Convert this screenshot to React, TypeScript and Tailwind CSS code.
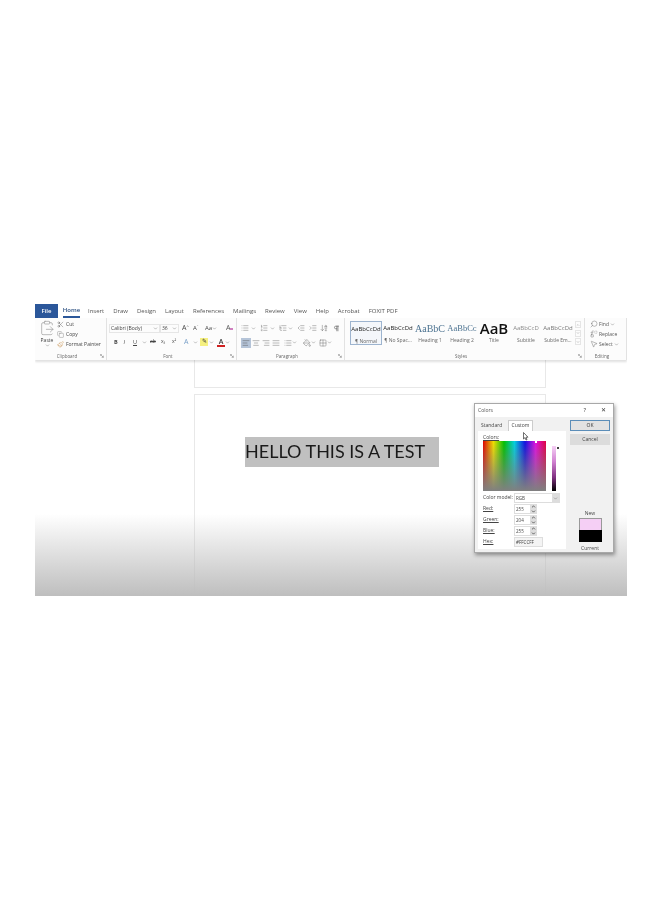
import React from "react";
import {
  AlignCenter,
  AlignJustify,
  AlignLeft,
  AlignRight,
  ArrowDownAZ,
  ChevronDown,
  ChevronUp,
  ClipboardPaste,
  Copy,
  Grid2x2,
  IndentDecrease,
  IndentIncrease,
  List,
  ListOrdered,
  ListTree,
  MousePointer2,
  PaintBucket,
  Paintbrush,
  Pilcrow,
  Replace,
  Scissors,
  Search,
} from "lucide-react";

const TABS = ["Insert", "Draw", "Design", "Layout", "References", "Mailings", "Review", "View", "Help", "Acrobat", "FOXIT PDF"];

const STYLES = [
  { sample: "AaBbCcDd", label: "¶ Normal", cls: "text-[6px] text-[#222]", box: true },
  { sample: "AaBbCcDd", label: "¶ No Spac...", cls: "text-[6px] text-[#222]", box: false },
  { sample: "AaBbC", label: "Heading 1", cls: "text-[10px] text-[#4d7391] font-['Liberation_Serif',serif]", box: false },
  { sample: "AaBbCc", label: "Heading 2", cls: "text-[8.5px] text-[#4d7391] font-['Liberation_Serif',serif]", box: false },
  { sample: "AaB", label: "Title", cls: "text-[15px] font-semibold text-[#111]", box: false },
  { sample: "AaBbCcD", label: "Subtitle", cls: "text-[6px] text-[#8a8a8a]", box: false },
  { sample: "AaBbCcDd", label: "Subtle Em...", cls: "text-[6px] text-[#777]", box: false },
];

function Caret() {
  return <ChevronDown size={5} strokeWidth={2} className="text-[#666] shrink-0" />;
}

function Group({ title, width, launcher = true, children }: { title: string; width: string; launcher?: boolean; children: React.ReactNode }) {
  return (
    <div className={`${width} h-full flex flex-col border-r border-[#e2e2e2] shrink-0`}>
      <div className="flex-1 min-h-0">{children}</div>
      <div className="relative h-[8px] flex items-center justify-center pr-[7px] text-[4.5px] leading-none text-[#666]">
        {title}
        {launcher && (
          <svg viewBox="0 0 6 6" className="absolute right-[2px] top-[2px] w-[4px] h-[4px] text-[#777]" fill="none" stroke="currentColor" strokeWidth="0.8">
            <path d="M0.5 3V0.5H3M1.5 1.5L5 5M5 2.5V5H2.5" />
          </svg>
        )}
      </div>
    </div>
  );
}

function SpinRow({ label, value }: { label: string; value: string }) {
  return (
    <div className="h-[11px] flex items-center">
      <span className="w-[31px] text-[5px] text-[#444] underline">{label}</span>
      <span className="w-[17px] h-[10px] bg-white border border-[#ddd] text-[4.5px] leading-[8px] pl-[1px] text-[#444]">{value}</span>
      <span className="w-[6px] h-[10px] flex flex-col bg-[#ddd]">
        <ChevronUp size={5} strokeWidth={3} className="text-[#222]" />
        <ChevronDown size={5} strokeWidth={3} className="text-[#222]" />
      </span>
    </div>
  );
}

function ColorsDialog() {
  return (
    <div className="absolute left-[439px] top-[99px] w-[140px] h-[150px] bg-[#f1f1f1] border border-[#a8a8a8] shadow-[1px_2px_4px_rgba(0,0,0,0.4)] flex flex-col">
      <div className="h-[13px] bg-white flex items-center justify-between pl-[3px] pr-[7px] text-[5px] text-[#555]">
        <span>Colors</span>
        <span className="flex gap-[15px] text-[6px] text-[#333]">
          <span>?</span>
          <span>✕</span>
        </span>
      </div>
      <div className="flex flex-1 min-h-0">
        <div className="w-[91px] pt-[3px] pb-[3px] pl-[3px] flex flex-col">
          <div className="h-[11px] flex items-end pl-[3px] text-[5px] text-[#444]">
            <span className="w-[27px] pb-[2px]">Standard</span>
            <span className="w-[25px] h-[11px] bg-white border border-[#ccc] border-b-0 flex items-center justify-center">Custom</span>
          </div>
          <div className="flex-1 bg-white pl-[5px] pt-[3px]">
            <div className="h-[7px] text-[5px] leading-[7px] text-[#444] underline">Colors:</div>
            <div className="flex">
              <div className="relative w-[63px] h-[50px] bg-[linear-gradient(to_bottom,transparent,#808080),linear-gradient(to_right,#e00000,#f0e000,#00c000,#00d0e0,#1010e0,#e010e0,#e00040)]">
                <span className="absolute left-[52px] top-0 w-[2px] h-[2px] bg-white" />
              </div>
              <div className="relative ml-[6px] mt-[5px] w-[4px] h-[45px] bg-[linear-gradient(to_bottom,#f5d0f5,#d080d0_35%,#803080_70%,#000000)]">
                <span className="absolute left-[5px] top-[1px] w-[2px] h-[2px] rounded-full bg-black" />
              </div>
            </div>
            <div className="h-[10px] mt-[2px] flex items-center">
              <span className="w-[31px] text-[5px] text-[#444] whitespace-nowrap">Color model:</span>
              <span className="w-[46px] h-[10px] bg-white border border-[#ddd] text-[4.5px] leading-[8px] pl-[1px] text-[#444] flex justify-between shrink-0">
                RGB
                <span className="w-[7px] bg-[#ddd] flex items-center justify-center">
                  <Caret />
                </span>
              </span>
            </div>
            <SpinRow label="Red:" value="255" />
            <SpinRow label="Green:" value="204" />
            <SpinRow label="Blue:" value="255" />
            <div className="h-[11px] flex items-center">
              <span className="w-[31px] text-[5px] text-[#444] underline">Hex:</span>
              <span className="w-[29px] h-[10px] bg-[#f4f4f4] border border-[#ddd] text-[4.5px] leading-[8px] pl-[1px] text-[#444]">#FFCCFF</span>
            </div>
          </div>
        </div>
        <div className="flex-1 flex flex-col items-center pt-[3px] pl-[1px]">
          <div className="w-[40px] h-[11px] bg-[#e2e2e2] border border-[#5b8db8] text-[5px] leading-[9px] text-center text-[#333]">OK</div>
          <div className="w-[40px] h-[11px] mt-[3px] bg-[#dcdcdc] text-[5px] leading-[11px] text-center text-[#444]">Cancel</div>
          <div className="mt-[65px] text-[5px] leading-[6px] text-[#444]">New</div>
          <div className="w-[23px] h-[12px] mt-[2px] bg-[#f5cff5] border border-[#999] border-b-0" />
          <div className="w-[23px] h-[12px] bg-black" />
          <div className="mt-[3px] text-[5px] leading-[6px] text-[#444]">Current</div>
        </div>
      </div>
    </div>
  );
}

export default function App() {
  return (
    <div className="min-h-[900px] bg-white pt-[304px] pl-[35px] font-['Open_Sans','Liberation_Sans',sans-serif]">
      <div className="relative w-[592px] h-[292px] overflow-hidden bg-white blur-[0.4px]">
        <div className="h-[14px] flex items-center text-[6px] text-[#555]">
          <div className="w-[23px] h-[14px] bg-[#2b579a] text-white flex items-center justify-center font-semibold">File</div>
          <div className="ml-[5px] w-[17px] h-[14px] flex items-center justify-center text-[#2b4f80] font-semibold border-b-2 border-[#2b579a]">Home</div>
          <div className="ml-[8px] flex gap-[9px]">
            {TABS.map((t) => (
              <span key={t}>{t}</span>
            ))}
          </div>
        </div>

        <div className="h-[42px] flex bg-[#fcfcfc] shadow-[0_2px_2px_rgba(0,0,0,0.12)] relative z-10 text-[#444]">
          <Group title="Clipboard" width="w-[72px]">
            <div className="flex pt-[2px] pl-[4px]">
              <div className="w-[16px] flex flex-col items-center text-[5px] leading-[6px]">
                <ClipboardPaste size={16} strokeWidth={1} className="text-[#999]" />
                <span className="mt-[1px]">Paste</span>
                <Caret />
              </div>
              <div className="ml-[2px] flex flex-col gap-[1px] text-[5px] leading-[9px]">
                <span className="flex items-center gap-[2px]"><Scissors size={7} strokeWidth={1.2} />Cut</span>
                <span className="flex items-center gap-[2px]"><Copy size={7} strokeWidth={1.2} className="text-[#666]" />Copy</span>
                <span className="flex items-center gap-[2px] whitespace-nowrap"><Paintbrush size={7} strokeWidth={1.2} className="text-[#c08030]" />Format Painter</span>
              </div>
            </div>
          </Group>

          <Group title="Font" width="w-[130px]">
            <div className="pl-[2px] pt-[5px]">
              <div className="h-[11px] flex items-center text-[5px]">
                <span className="w-[51px] h-[9px] border border-[#e6e6e6] flex items-center justify-between px-[1px]">Calibri (Body)<Caret /></span>
                <span className="w-[19px] h-[9px] border border-[#e6e6e6] flex items-center justify-between px-[1px]">36<Caret /></span>
                <span className="ml-[3px] w-[11px] text-[7px]">A<sup className="text-[4px]">^</sup></span>
                <span className="w-[12px] text-[6px]">A<sup className="text-[4px]">ˇ</sup></span>
                <span className="w-[21px] flex items-center text-[6px]">Aa<Caret /></span>
                <span className="relative text-[7px] text-[#555]">
                  A
                  <span className="absolute left-[4px] top-[5px] w-[3px] h-[2px] bg-[#d080c0]" />
                </span>
              </div>
              <div className="h-[14px] mt-[1px] pl-[5px] flex items-center text-[5.5px] font-semibold">
                <span className="w-[9.5px] font-bold">B</span>
                <span className="w-[9.5px] italic font-normal">I</span>
                <span className="w-[9px] underline font-normal">U</span>
                <span className="w-[8px]"><Caret /></span>
                <span className="w-[11px] line-through font-normal text-[5px]">ab</span>
                <span className="w-[11px] font-normal text-[5px]">x₂</span>
                <span className="w-[12px] font-normal text-[5px]">x²</span>
                <span className="w-[9px] font-normal text-[#7aa0c8] text-[7px]">A</span>
                <span className="w-[7px]"><Caret /></span>
                <span className="w-[8px] h-[8px] bg-[#f5f080] text-[6px] leading-[7px] text-center font-normal">✎</span>
                <span className="w-[9px] pl-[1px]"><Caret /></span>
                <span className="w-[8px] text-[7px] text-[#333] border-b-2 border-[#d02020] leading-[7px] text-center">A</span>
                <Caret />
              </div>
            </div>
          </Group>

          <Group title="Paragraph" width="w-[108px]">
            <div className="pl-[4px] pt-[4px] text-[#555]">
              <div className="h-[12px] flex items-center">
                <List size={8} strokeWidth={1.2} /><span className="w-[11px] pl-[2px]"><Caret /></span>
                <ListOrdered size={8} strokeWidth={1.2} /><span className="w-[11px] pl-[2px]"><Caret /></span>
                <ListTree size={8} strokeWidth={1.2} /><span className="w-[9px] pl-[1px]"><Caret /></span>
                <IndentDecrease size={8} strokeWidth={1.2} className="ml-[1px]" />
                <IndentIncrease size={8} strokeWidth={1.2} className="ml-[4px]" />
                <ArrowDownAZ size={8} strokeWidth={1.2} className="ml-[3px]" />
                <Pilcrow size={7} strokeWidth={2} className="ml-[5px]" />
              </div>
              <div className="h-[13px] mt-[2px] flex items-center">
                <span className="w-[10px] h-[10px] bg-[#b5c4d8] flex items-center justify-center"><AlignLeft size={8} strokeWidth={1.4} /></span>
                <span className="w-[10px] flex justify-center"><AlignCenter size={8} strokeWidth={1.2} /></span>
                <span className="w-[10px] flex justify-center"><AlignRight size={8} strokeWidth={1.2} /></span>
                <span className="w-[10px] flex justify-center"><AlignJustify size={8} strokeWidth={1.2} /></span>
                <span className="ml-[3px] flex items-center"><List size={8} strokeWidth={1.2} /><Caret /></span>
                <span className="ml-[6px] flex items-center"><PaintBucket size={8} strokeWidth={1.2} /><Caret /></span>
                <span className="ml-[3px] flex items-center"><Grid2x2 size={8} strokeWidth={1.2} /><Caret /></span>
              </div>
            </div>
          </Group>

          <Group title="Styles" width="w-[240px]">
            <div className="flex pt-[3px] pl-[5px]">
              {STYLES.map((s) => (
                <div
                  key={s.label}
                  className={`w-[32px] h-[24px] flex flex-col items-center shrink-0 ${s.box ? "border border-[#9db4cf] bg-[#f4f7fb]" : ""}`}
                >
                  <span className={`${s.cls} h-[15px] leading-[15px] whitespace-nowrap`}>{s.sample}</span>
                  <span className="mt-[1px] text-[5px] leading-[7px] text-[#666] whitespace-nowrap">{s.label}</span>
                </div>
              ))}
              <div className="ml-[1px] w-[6px] h-[24px] flex flex-col justify-between text-[#777]">
                <span className="h-[7px] border border-[#e5e5e5] flex items-center justify-center"><ChevronUp size={4} strokeWidth={2} /></span>
                <span className="h-[7px] border border-[#e5e5e5] flex items-center justify-center"><ChevronDown size={4} strokeWidth={2} /></span>
                <span className="h-[7px] border border-[#e5e5e5] flex items-center justify-center"><ChevronDown size={4} strokeWidth={2} /></span>
              </div>
            </div>
          </Group>

          <Group title="Editing" width="w-[42px]" launcher={false}>
            <div className="pl-[5px] pt-[1px] text-[5px] leading-[10px] text-[#555]">
              <div className="flex items-center gap-[1px]"><Search size={8} strokeWidth={1.2} className="-scale-x-100" />Find<Caret /></div>
              <div className="flex items-center gap-[1px]"><Replace size={8} strokeWidth={1.2} />Replace</div>
              <div className="flex items-center gap-[1px]"><MousePointer2 size={8} strokeWidth={1.2} />Select<Caret /></div>
            </div>
          </Group>
        </div>

        <div className="ml-[159px] w-[352px] h-[236px] flex flex-col">
          <div className="h-[28px] border-x border-b border-[#e8e8e8] shrink-0" />
          <div className="flex-1 mt-[6px] border-x border-t border-[#e8e8e8] pt-[42px] pl-[50px]">
            <div className="w-[194px] h-[30px] bg-[#c0c0c0] text-[18px] leading-[28px] text-[#1a1a1a] whitespace-nowrap font-['Lato',sans-serif]">
              HELLO THIS IS A TEST
            </div>
          </div>
        </div>

        <div className="absolute left-0 right-0 bottom-0 h-[82px] bg-[linear-gradient(to_bottom,rgba(190,190,190,0),rgba(190,190,190,1))] pointer-events-none" />

        <ColorsDialog />

        <svg viewBox="0 0 6 9" className="absolute left-[488px] top-[128px] w-[6px] h-[9px]" fill="#fff" stroke="#333" strokeWidth="0.7">
          <path d="M0.5 0.5V7L2 5.6L3 8L4 7.6L3 5.2H5Z" />
        </svg>
      </div>
    </div>
  );
}
